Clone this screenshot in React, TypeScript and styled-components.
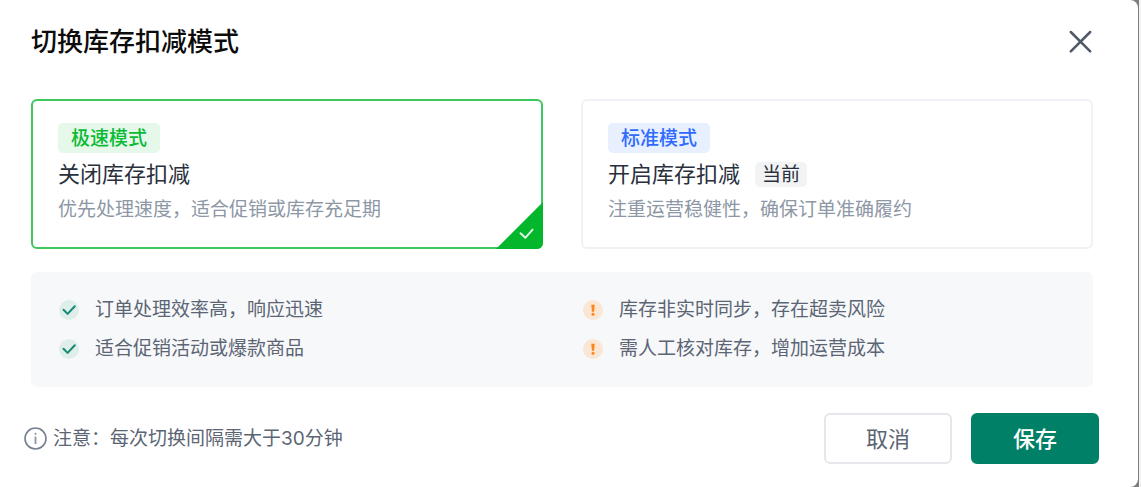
import React, { useState } from 'react';
import styled, { createGlobalStyle } from 'styled-components';

const GlobalStyle = createGlobalStyle`
  * { box-sizing: border-box; }
  body {
    margin: 0;
    background: #f4f4f4;
    font-family: Inter, "Noto Sans CJK SC", "Noto Sans", sans-serif;
    color: #2a303b;
  }
`;

const Backdrop = styled.div`
  margin-right: 2px;
  padding-right: 1px;
  background: #7b7f7d;
`;

const Dialog = styled.form`
  min-height: 100vh;
  padding: 20px 45px 23px 31px;
  background: #fff;
  border-radius: 0 8px 8px 0;
`;

const Header = styled.header`
  display: flex;
  align-items: center;
  justify-content: space-between;
  height: 44px;
`;

const Title = styled.h1`
  margin: 0;
  font-size: 26px;
  line-height: 42px;
  font-weight: 500;
  color: #0c0c0c;
`;

const CloseButton = styled.button`
  display: flex;
  padding: 0;
  border: 0;
  background: none;
  color: #4f5968;
  cursor: pointer;
`;

const Modes = styled.div`
  display: grid;
  grid-template-columns: 1fr 1fr;
  gap: 38px;
  margin-top: 35px;
`;

const ModeCard = styled.label<{ $selected: boolean }>`
  position: relative;
  display: flex;
  flex-direction: column;
  align-items: flex-start;
  padding: 22px 25px;
  border: 2px solid ${(p) => (p.$selected ? '#3dc75c' : '#f0f1f6')};
  border-radius: 6px;
  cursor: pointer;
`;

const HiddenRadio = styled.input`
  position: absolute;
  inset: 0;
  margin: 0;
  opacity: 0;
`;

const ModeTag = styled.span<{ $tone: 'green' | 'blue' }>`
  padding: 2px 13px 0;
  border-radius: 5px;
  font-size: 19px;
  line-height: 28px;
  font-weight: 500;
  color: ${(p) => (p.$tone === 'green' ? '#0bbb35' : '#2f6bff')};
  background: ${(p) => (p.$tone === 'green' ? '#e5f8ea' : '#e8efff')};
`;

const ModeName = styled.span`
  display: flex;
  align-items: center;
  gap: 15px;
  height: 42px;
  font-size: 22px;
  line-height: 30px;
  color: #2a303b;
`;

const CurrentTag = styled.span`
  padding: 0 7px;
  border-radius: 5px;
  font-size: 19px;
  line-height: 25px;
  background: #f2f3f5;
`;

const ModeText = styled.span`
  font-size: 19px;
  line-height: 30px;
  color: #8d97a5;
`;

const Corner = styled.svg`
  position: absolute;
  right: -2px;
  bottom: -2px;
  border-bottom-right-radius: 6px;
`;

const Effects = styled.section`
  display: grid;
  grid-template-columns: 1fr 1fr;
  gap: 42px;
  margin-top: 23px;
  padding: 18px 28px 19px;
  border-radius: 6px;
  background: #f7f8fa;
`;

const EffectList = styled.ul`
  margin: 0;
  padding: 0;
  list-style: none;
`;

const Effect = styled.li`
  display: flex;
  align-items: center;
  gap: 16px;
  font-size: 19px;
  line-height: 39px;
  color: #5b6574;
`;

const Footer = styled.footer`
  display: flex;
  align-items: center;
  justify-content: space-between;
  margin: 26px -6px 0 -7px;
`;

const Notice = styled.p`
  display: flex;
  align-items: center;
  gap: 6px;
  margin: 0;
  font-size: 19px;
  line-height: 30px;
  color: #5b6574;
`;

const Actions = styled.div`
  display: flex;
  gap: 19px;
`;

const ActionButton = styled.button<{ $primary?: boolean }>`
  width: 128px;
  height: 51px;
  padding: 0;
  border: 2px solid ${(p) => (p.$primary ? '#008066' : '#e5e7ed')};
  border-radius: 6px;
  font-family: inherit;
  font-size: 22px;
  line-height: 30px;
  font-weight: ${(p) => (p.$primary ? 500 : 400)};
  color: ${(p) => (p.$primary ? '#fff' : '#5b6574')};
  background: ${(p) => (p.$primary ? '#008066' : '#fff')};
  cursor: pointer;
`;

const CloseIcon = () => (
  <svg width="24" height="24" viewBox="0 0 24 24" fill="none" stroke="currentColor" strokeWidth="2.5" strokeLinecap="round" aria-hidden="true">
    <path d="M1.8 2 21.2 21.4M21.2 2 1.8 21.4" />
  </svg>
);

const SelectedCorner = () => (
  <Corner width="47" height="47" viewBox="0 0 47 47" aria-hidden="true">
    <path d="M47 0V47H0Z" fill="#03b62b" />
    <path d="M24.5 31.2 29.3 35.8 36.6 27.6" fill="none" stroke="#e4f8e9" strokeWidth="1.9" strokeLinecap="round" strokeLinejoin="round" />
  </Corner>
);

const CheckIcon = () => (
  <svg width="20" height="20" viewBox="0 0 20 20" fill="none" aria-hidden="true">
    <circle cx="10" cy="10" r="10" fill="#dfeeeb" />
    <path d="M4.5 9.8 8.6 13.9 15.8 6.2" stroke="#148a72" strokeWidth="2" strokeLinecap="round" strokeLinejoin="round" />
  </svg>
);

const WarnIcon = () => (
  <svg width="20" height="20" viewBox="0 0 20 20" aria-hidden="true">
    <circle cx="10" cy="10" r="10" fill="#fae6d4" />
    <path d="M8.3 4.8H11.7L11.1 11.8H8.9Z" fill="#ff8519" />
    <circle cx="10" cy="14.2" r="1.5" fill="#ff8519" />
  </svg>
);

const InfoIcon = () => (
  <svg width="23" height="23" viewBox="0 0 23 23" fill="none" aria-hidden="true">
    <circle cx="11.5" cy="11.5" r="10.5" stroke="#768190" strokeWidth="1.6" />
    <path d="M11.5 9.6V17" stroke="#8c96a3" strokeWidth="1.8" />
    <circle cx="11.5" cy="6.8" r="1.1" fill="#8c96a3" />
  </svg>
);

const modes = [
  { id: 'fast', tone: 'green' as const, tag: '极速模式', name: '关闭库存扣减', text: '优先处理速度，适合促销或库存充足期', current: false },
  { id: 'standard', tone: 'blue' as const, tag: '标准模式', name: '开启库存扣减', text: '注重运营稳健性，确保订单准确履约', current: true },
];

const benefits = ['订单处理效率高，响应迅速', '适合促销活动或爆款商品'];
const risks = ['库存非实时同步，存在超卖风险', '需人工核对库存，增加运营成本'];

export default function App() {
  const [mode, setMode] = useState('fast');

  return (
    <>
      <GlobalStyle />
      <Backdrop>
        <Dialog role="dialog" aria-labelledby="dialog-title" onSubmit={(e) => e.preventDefault()}>
          <Header>
            <Title id="dialog-title">切换库存扣减模式</Title>
            <CloseButton type="button" aria-label="关闭">
              <CloseIcon />
            </CloseButton>
          </Header>

          <Modes role="radiogroup" aria-labelledby="dialog-title">
            {modes.map((m) => (
              <ModeCard key={m.id} $selected={mode === m.id}>
                <HiddenRadio type="radio" name="mode" value={m.id} checked={mode === m.id} onChange={() => setMode(m.id)} />
                <ModeTag $tone={m.tone}>{m.tag}</ModeTag>
                <ModeName>
                  {m.name}
                  {m.current && <CurrentTag>当前</CurrentTag>}
                </ModeName>
                <ModeText>{m.text}</ModeText>
                {mode === m.id && <SelectedCorner />}
              </ModeCard>
            ))}
          </Modes>

          <Effects>
            <EffectList>
              {benefits.map((b) => (
                <Effect key={b}>
                  <CheckIcon />
                  {b}
                </Effect>
              ))}
            </EffectList>
            <EffectList>
              {risks.map((r) => (
                <Effect key={r}>
                  <WarnIcon />
                  {r}
                </Effect>
              ))}
            </EffectList>
          </Effects>

          <Footer>
            <Notice>
              <InfoIcon />
              注意：每次切换间隔需大于30分钟
            </Notice>
            <Actions>
              <ActionButton type="button">取消</ActionButton>
              <ActionButton type="submit" $primary>保存</ActionButton>
            </Actions>
          </Footer>
        </Dialog>
      </Backdrop>
    </>
  );
}
